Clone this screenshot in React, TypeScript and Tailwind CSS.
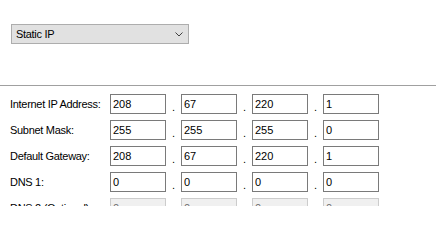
const rows = [
  { label: 'Internet IP Address:', values: ['208', '67', '220', '1'] },
  { label: 'Subnet Mask:', values: ['255', '255', '255', '0'] },
  { label: 'Default Gateway:', values: ['208', '67', '220', '1'] },
  { label: 'DNS 1:', values: ['0', '0', '0', '0'] },
  { label: 'DNS 2 (Optional):', values: ['0', '0', '0', '0'], disabled: true },
]

function IpField({ values, disabled }: { values: string[]; disabled?: boolean }) {
  return (
    <div className="flex items-center">
      {values.map((v, i) => (
        <div key={i} className="flex items-center">
          {i > 0 && <span className="w-[15px] pt-[6px] text-center leading-none">.</span>}
          <input
            readOnly
            disabled={disabled}
            defaultValue={v}
            className={`h-[20px] w-[56px] px-[2px] text-[11px] leading-none outline-none ${
              disabled
                ? 'border border-[#cccccc] bg-[#f0f0f0] text-[#6d6d6d]'
                : 'border border-[#7a7a7a] bg-white text-black'
            }`}
          />
        </div>
      ))}
    </div>
  )
}

export default function App() {
  return (
    <div className="h-[206px] w-[436px] overflow-hidden bg-white font-['Liberation_Sans',Arial,sans-serif] text-[11px] text-black">
      <div className="pb-[41px] pl-[11px] pt-[24px]">
        <div className="flex h-[20px] w-[178px] items-center justify-between border border-[#adadad] bg-[#e1e1e1] pl-[4px] pr-[5px]">
          <span className="tracking-[-0.3px]">Static IP</span>
          <svg width="8" height="5" viewBox="0 0 8 5" fill="none">
            <path d="M0.5 0.5 L4 4 L7.5 0.5" stroke="#404040" strokeWidth="1" />
          </svg>
        </div>
      </div>
      <div className="h-px bg-[#a0a0a0]" />
      <div className="flex flex-col gap-[6px] pl-[10px] pt-[8px]">
        {rows.map((r) => (
          <div key={r.label} className="flex items-center">
            <span className="w-[100px] tracking-[-0.3px]">{r.label}</span>
            <IpField values={r.values} disabled={r.disabled} />
          </div>
        ))}
      </div>
    </div>
  )
}
